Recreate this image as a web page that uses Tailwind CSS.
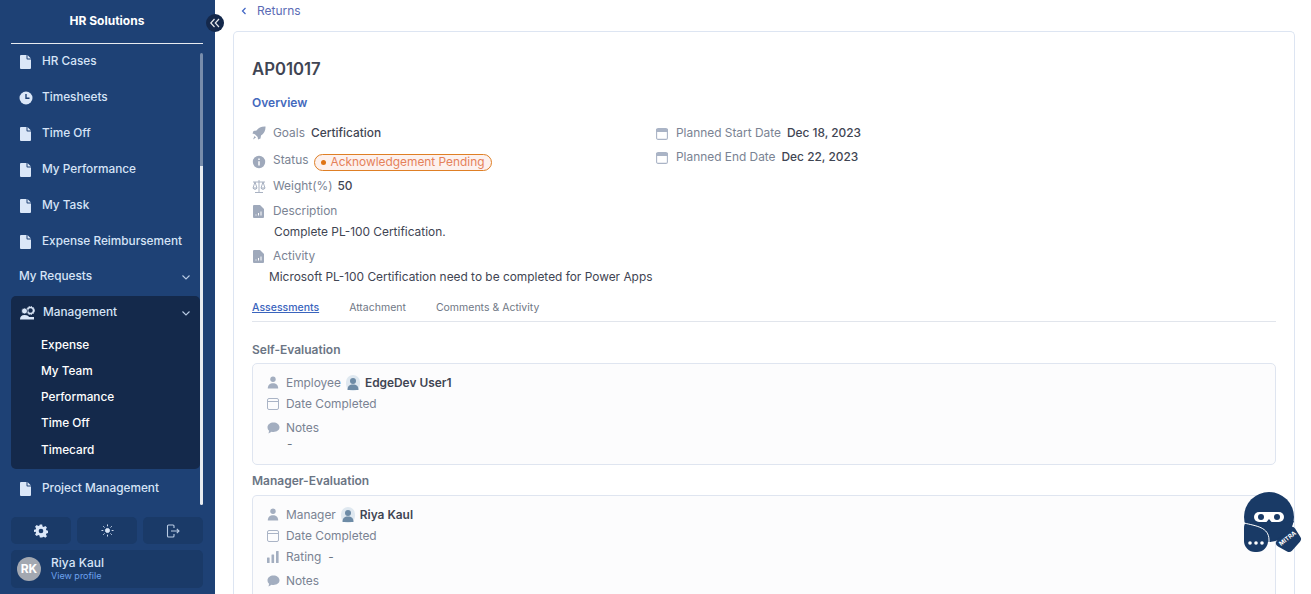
<!DOCTYPE html>
<html lang="en">
<head>
<meta charset="UTF-8">
<title>AP01017</title>
<script src="https://cdn.jsdelivr.net/npm/@tailwindcss/browser@4"></script>
</head>
<body class="h-[594px] overflow-hidden bg-white font-['Inter',sans-serif] text-[11.9px] text-[#374151]">
<div class="flex h-[594px] overflow-hidden">

  <!-- sidebar -->
  <aside class="relative w-[215px] h-full shrink-0 bg-[#1e4175] pl-[11px] pr-[12px]">
    <div class="h-[44px] border-b-[1.5px] border-white/90 pt-[12px] text-center text-[12px] leading-[17px] font-bold text-white">HR Solutions</div>
    <button class="absolute left-[206px] top-[14px] z-10 flex h-[18px] w-[18px] items-center justify-center rounded-full bg-[#14284b]">
      <svg width="12" height="12" viewBox="0 0 12 12" fill="none" stroke="#e5e7eb" stroke-width="1.2"><path d="M5.500 2 1.800 6l3.700 4M10 2 6.300 6 10 10"/></svg>
    </button>

    <!-- scrollbar -->
    <div class="absolute left-[200px] top-[53px] h-[113px] w-[3px] rounded-t bg-white/40"></div>
    <div class="absolute left-[200px] top-[166px] h-[339px] w-[3px] rounded-b bg-white/90"></div>

    <nav class="w-[189px] text-[11.8px] font-[450] text-[#d6e4f7]">
      <a class="flex h-[36px] items-center pl-[9px]">
        <svg class="mr-[11px] w-[11px] h-[14px]" viewBox="0 0 11 14" fill="#dbe7f8"><path d="M0 1a1 1 0 0 1 1-1h5.500v3.500a1 1 0 0 0 1 1H11V13a1 1 0 0 1-1 1H1a1 1 0 0 1-1-1zM7.500 0 11 3.500H7.500z"/></svg>
        HR Cases</a>
      <a class="flex h-[36px] items-center pl-[8px]">
        <svg class="mr-[9px] w-[14px] h-[14px]" viewBox="0 0 14 14"><circle cx="7" cy="7" r="6.500" fill="#dbe7f8"/><path d="M7 3v4.300h3.500" fill="none" stroke="#1e4175" stroke-width="1.400"/></svg>
        Timesheets</a>
      <a class="flex h-[36px] items-center pl-[9px]">
        <svg class="mr-[11px] w-[11px] h-[14px]" viewBox="0 0 11 14" fill="#dbe7f8"><path d="M0 1a1 1 0 0 1 1-1h5.500v3.500a1 1 0 0 0 1 1H11V13a1 1 0 0 1-1 1H1a1 1 0 0 1-1-1zM7.500 0 11 3.500H7.500z"/></svg>
        Time Off</a>
      <a class="flex h-[36px] items-center pl-[9px]">
        <svg class="mr-[11px] w-[11px] h-[14px]" viewBox="0 0 11 14" fill="#dbe7f8"><path d="M0 1a1 1 0 0 1 1-1h5.500v3.500a1 1 0 0 0 1 1H11V13a1 1 0 0 1-1 1H1a1 1 0 0 1-1-1zM7.500 0 11 3.500H7.500z"/></svg>
        My Performance</a>
      <a class="flex h-[36px] items-center pl-[9px]">
        <svg class="mr-[11px] w-[11px] h-[14px]" viewBox="0 0 11 14" fill="#dbe7f8"><path d="M0 1a1 1 0 0 1 1-1h5.500v3.500a1 1 0 0 0 1 1H11V13a1 1 0 0 1-1 1H1a1 1 0 0 1-1-1zM7.500 0 11 3.500H7.500z"/></svg>
        My Task</a>
      <a class="flex h-[36px] items-center pl-[9px]">
        <svg class="mr-[11px] w-[11px] h-[14px]" viewBox="0 0 11 14" fill="#dbe7f8"><path d="M0 1a1 1 0 0 1 1-1h5.500v3.500a1 1 0 0 0 1 1H11V13a1 1 0 0 1-1 1H1a1 1 0 0 1-1-1zM7.500 0 11 3.500H7.500z"/></svg>
        Expense Reimbursement</a>
      <a class="flex h-[36px] items-center justify-between pl-[8px] pr-[9px] pb-[2px]">
        My Requests
        <svg width="10" height="10" viewBox="0 0 10 10" fill="none" stroke="#b9cbe4" stroke-width="1.100"><path d="M1.500 3.500 5 7l3.500-3.500"/></svg>
      </a>

      <div class="h-[173px] rounded-[5px] bg-[#14294b]">
        <div class="flex h-[32px] items-center justify-between pt-[2px] pl-[8px] pr-[9px]">
          <span class="flex items-center">
            <svg class="mr-[8px]" width="16" height="15" viewBox="0 0 16 15" fill="#dbe7f8"><circle cx="11.500" cy="4.500" r="3" fill="none" stroke="#dbe7f8" stroke-width="1.500"/><circle cx="11.500" cy="4.500" r="4.100" fill="none" stroke="#dbe7f8" stroke-width="1" stroke-dasharray="1.200 1.200"/><circle cx="5.500" cy="5" r="3" stroke="#14294b" stroke-width=".8"/><path d="M1 13.500c0-3 1.500-4.500 4.500-4.500S10 10.500 10 11h5v2.500z"/></svg>
            Management
          </span>
          <svg width="10" height="10" viewBox="0 0 10 10" fill="none" stroke="#b9cbe4" stroke-width="1.100"><path d="M1.500 3.500 5 7l3.500-3.500"/></svg>
        </div>
        <div class="pl-[30px] pt-[4px] text-white leading-[26px]">
          <a class="block h-[26px]">Expense</a>
          <a class="block h-[26px]">My Team</a>
          <a class="block h-[26px]">Performance</a>
          <a class="block h-[26px]">Time Off</a>
          <a class="block h-[27px] leading-[28px]">Timecard</a>
        </div>
      </div>

      <a class="mt-[2px] flex h-[36px] items-center pl-[9px]">
        <svg class="mr-[11px] w-[11px] h-[14px]" viewBox="0 0 11 14" fill="#dbe7f8"><path d="M0 1a1 1 0 0 1 1-1h5.500v3.500a1 1 0 0 0 1 1H11V13a1 1 0 0 1-1 1H1a1 1 0 0 1-1-1zM7.500 0 11 3.500H7.500z"/></svg>
        Project Management</a>
    </nav>

    <div class="mt-[10px] flex gap-[6px]">
      <button class="flex h-[27px] w-[60px] items-center justify-center rounded-[5px] bg-[#1a3a68]">
        <svg width="14" height="14" viewBox="0 0 24 24" fill="#dbe7f8" fill-rule="evenodd"><path d="M10 1h4l.6 3.200 2 .9 2.800-1.800 2.800 2.800-1.800 2.800.9 2 3.200.6v4l-3.200.6-.9 2 1.800 2.800-2.800 2.800-2.800-1.800-2 .9L14 23h-4l-.6-3.200-2-.9-2.800 1.800-2.800-2.800 1.800-2.800-.9-2L-.5 14v-4l3.200-.6.900-2-1.800-2.800 2.800-2.800 2.800 1.800 2-.9zM12 8a4 4 0 1 0 0 8 4 4 0 0 0 0-8z"/></svg>
      </button>
      <button class="flex h-[27px] w-[60px] items-center justify-center rounded-[5px] bg-[#1a3a68]">
        <svg width="13" height="13" viewBox="0 0 14 14" fill="none" stroke="#dbe7f8"><circle cx="7" cy="7" r="2.200" fill="#dbe7f8"/><path d="M7 .5v2M7 11.500v2M.5 7h2M11.500 7h2M2.400 2.400l1.400 1.400M10.200 10.200l1.400 1.400M2.400 11.600l1.400-1.400M10.200 3.800l1.400-1.400"/></svg>
      </button>
      <button class="flex h-[27px] w-[60px] items-center justify-center rounded-[5px] bg-[#1a3a68]">
        <svg width="14" height="14" viewBox="0 0 14 14" fill="none" stroke="#b9cbe4" stroke-width="1.100"><path d="M8 4V2a1 1 0 0 0-1-1H2.500a1 1 0 0 0-1 1v10a1 1 0 0 0 1 1H7a1 1 0 0 0 1-1v-2M5 7h8M10.800 4.800 13 7l-2.200 2.200"/></svg>
      </button>
    </div>

    <div class="mt-[6px] flex h-[38px] items-center rounded-[5px] bg-[#1a3a68] pl-[6px]">
      <div class="flex h-[24px] w-[24px] items-center justify-center rounded-full bg-[#a3a8b1] text-[12px] font-bold text-white">RK</div>
      <div class="ml-[10px]">
        <div class="text-[12px] leading-[14px] font-[450] text-[#d6e4f7]">Riya Kaul</div>
        <div class="text-[9px] leading-[12px] text-[#6ea3ee]">View profile</div>
      </div>
    </div>
  </aside>

  <!-- main -->
  <main class="relative flex-1 pl-[18px] pr-[16px]">
    <a class="flex h-[31px] items-start pl-[7px] pt-[3px] text-[12px] leading-[15px] text-[#5b6bb5]">
      <svg class="mr-[9px] mt-[3px]" width="8" height="10" viewBox="0 0 8 10" fill="none" stroke="#3f64c4" stroke-width="1.200"><path d="M5.500 2 2.500 5l3 3"/></svg>
      Returns
    </a>

    <section class="h-[563px] overflow-hidden rounded-t-[5px] border border-b-0 border-[#dde5f2] bg-white px-[18px]">
      <h1 class="pt-[26px] text-[16.7px] leading-[22px] font-semibold text-[#3f4553]">AP01017</h1>
      <h2 class="mt-[15px] text-[12px] leading-[16px] font-semibold text-[#4469bd]">Overview</h2>

      <div class="flex">
        <div class="w-[404px]">
          <div class="mt-[14px] flex h-[16px] items-center">
            <svg class="mr-[7px]" width="14" height="14" viewBox="0 0 14 14" fill="#9fa9bb"><path d="M13.500.5c.2 4-1.300 7-4.500 9l-.500 3-2.500 1-.3-2.500-2.800-2.800L.500 7.500l1-2.500 3-.5C6.500 1.500 9.500.3 13.500.5zM2.500 10l1.500 1.500L1 13.500z"/></svg>
            <span class="mr-[6px] text-[#7a8393]">Goals</span>
            <span class="font-[450] text-[#3f4553]">Certification</span>
          </div>
          <div class="mt-[12px] flex h-[17px] items-center">
            <svg class="mr-[7px]" width="14" height="14" viewBox="0 0 14 14"><circle cx="7" cy="7" r="6.200" fill="#9fa9bb"/><path d="M7 6.300V10.500M7 3.500v1.500" stroke="#fff" stroke-width="1.500"/></svg>
            <span class="mr-[6px] mt-[-3px] text-[#7a8393]">Status</span>
            <span class="mt-[1px] flex h-[17px] items-center rounded-full border border-[#df7f25] bg-[#fdf1ee] pl-[6px] pr-[6px] text-[#e5815a]">
              <span class="mr-[4px] h-[5px] w-[5px] rounded-full bg-[#df7416]"></span>Acknowledgement Pending
            </span>
          </div>
          <div class="mt-[8px] flex h-[16px] items-center">
            <svg class="mr-[7px]" width="14" height="13" viewBox="0 0 14 13" fill="none" stroke="#9fa9bb" stroke-width=".9"><path d="M7 0v12M3 12.500h8M1 2h12M3 2 1 8h4zM11 2 9 8h4zM1 8c.5 1.800 3.500 1.800 4 0M9 8c.5 1.800 3.500 1.800 4 0"/></svg>
            <span class="mr-[5px] text-[#7a8393]">Weight(%)</span>
            <span class="font-[450] text-[#3f4553]">50</span>
          </div>
          <div class="mt-[9px] flex h-[16px] items-center">
            <svg class="mr-[9px] ml-[1px]" width="11" height="13" viewBox="0 0 11 13" fill="#9fa9bb"><path d="M1 0h6l4 4v8a1 1 0 0 1-1 1H1a1 1 0 0 1-1-1V1a1 1 0 0 1 1-1z"/><path d="M3 10.500V9.500M5.500 10.500V8M8 10.500V6.500" stroke="#fff" stroke-width="1"/></svg>
            <span class="text-[#7a8393]">Description</span>
          </div>
          <div class="mt-[5px] pl-[22px] leading-[16px] text-[#3f4553]">Complete PL-100 Certification.</div>
          <div class="mt-[8px] flex h-[16px] items-center">
            <svg class="mr-[9px] ml-[1px]" width="11" height="13" viewBox="0 0 11 13" fill="#9fa9bb"><path d="M1 0h6l4 4v8a1 1 0 0 1-1 1H1a1 1 0 0 1-1-1V1a1 1 0 0 1 1-1z"/><path d="M3 10.500V9.500M5.500 10.500V8M8 10.500V6.500" stroke="#fff" stroke-width="1"/></svg>
            <span class="text-[#7a8393]">Activity</span>
          </div>
          <div class="mt-[5px] w-[500px] pl-[17px] leading-[16px] text-[#3f4553]">Microsoft PL-100 Certification need to be completed for Power Apps</div>
        </div>
        <div>
          <div class="mt-[14px] flex h-[16px] items-center">
            <svg class="mr-[8px]" width="12" height="13" viewBox="0 0 12 13" fill="none" stroke="#aab4c6" stroke-width="1.100"><rect x=".6" y="1.600" width="10.800" height="10.800" rx="1.500"/><path d="M.6 2.500h10.800v2H.6z" fill="#aab4c6"/></svg>
            <span class="mr-[6px] text-[#7a8393]">Planned Start Date</span>
            <span class="font-[450] text-[#3f4553]">Dec 18, 2023</span>
          </div>
          <div class="mt-[8px] flex h-[16px] items-center">
            <svg class="mr-[8px]" width="12" height="13" viewBox="0 0 12 13" fill="none" stroke="#aab4c6" stroke-width="1.100"><rect x=".6" y="1.600" width="10.800" height="10.800" rx="1.500"/><path d="M.6 2.500h10.800v2H.6z" fill="#aab4c6"/></svg>
            <span class="mr-[6px] text-[#7a8393]">Planned End Date</span>
            <span class="font-[450] text-[#3f4553]">Dec 22, 2023</span>
          </div>
        </div>
      </div>

      <!-- tabs -->
      <div class="mt-[8px] flex h-[29px] items-center gap-[30px] border-b border-[#e1e5ec] pt-[1px] text-[10.5px] text-[#6f7785]">
        <a class="text-[#3a64bd] font-medium underline">Assessments</a>
        <a>Attachment</a>
        <a>Comments &amp; Activity</a>
      </div>

      <h3 class="mt-[20px] text-[12px] leading-[16px] font-semibold text-[#6b7584]">Self-Evaluation</h3>
      <div class="mt-[5px] h-[102px] rounded-[5px] border border-[#dfe5f0] bg-[#fcfcfd] pl-[14px]">
        <div class="mt-[10px] flex h-[17px] items-center">
          <svg class="mr-[7px]" width="12" height="13" viewBox="0 0 12 13" fill="#a3aec0"><circle cx="6" cy="3.200" r="2.700"/><path d="M.8 12.500C.8 9 3 7.300 6 7.300s5.200 1.700 5.200 5.200z"/></svg>
          <span class="text-[#7a8393]">Employee</span>
          <svg class="mx-[5px]" width="14" height="16" viewBox="0 0 14 16"><rect width="14" height="16" rx="7" fill="#dfe8f0"/><circle cx="7" cy="6" r="3" fill="#6d8ba6"/><path d="M1.500 15c0-4 2-5.500 5.500-5.500s5.500 1.500 5.500 5.500z" fill="#6d8ba6"/></svg>
          <span class="font-semibold text-[#3f4553]">EdgeDev User1</span>
        </div>
        <div class="mt-[4px] flex h-[17px] items-center">
          <svg class="mr-[7px]" width="12" height="13" viewBox="0 0 12 13" fill="none" stroke="#aab4c6"><rect x=".5" y="1.500" width="11" height="11" rx="1.500"/><path d="M.5 4.500h11"/></svg>
          <span class="text-[#7a8393]">Date Completed</span>
        </div>
        <div class="mt-[7px] flex h-[17px] items-center">
          <svg class="mr-[6px]" width="13" height="12" viewBox="0 0 13 12" fill="#a3aec0"><path d="M6.500.5c3.400 0 6 2.100 6 4.800S9.900 10 6.500 10c-.7 0-1.300-.1-1.900-.2L1.500 11.500l.6-2.800C1 7.900.5 6.700.5 5.300.5 2.600 3.100.5 6.500.5z"/></svg>
          <span class="text-[#7a8393]">Notes</span>
        </div>
        <div class="mt-[-1px] pl-[20px] leading-[17px] text-[#6b7584]">-</div>
      </div>

      <h3 class="mt-[8px] text-[12px] leading-[16px] font-semibold text-[#6b7584]">Manager-Evaluation</h3>
      <div class="mt-[6px] h-[99px] rounded-t-[5px] border border-b-0 border-[#dfe5f0] bg-[#fcfcfd] pl-[14px]">
        <div class="mt-[10px] flex h-[17px] items-center">
          <svg class="mr-[7px]" width="12" height="13" viewBox="0 0 12 13" fill="#a3aec0"><circle cx="6" cy="3.200" r="2.700"/><path d="M.8 12.500C.8 9 3 7.300 6 7.300s5.200 1.700 5.200 5.200z"/></svg>
          <span class="text-[#7a8393]">Manager</span>
          <svg class="mx-[5px]" width="14" height="16" viewBox="0 0 14 16"><rect width="14" height="16" rx="7" fill="#dfe8f0"/><circle cx="7" cy="6" r="3" fill="#6d8ba6"/><path d="M1.500 15c0-4 2-5.500 5.500-5.500s5.500 1.500 5.500 5.500z" fill="#6d8ba6"/></svg>
          <span class="font-semibold text-[#3f4553]">Riya Kaul</span>
        </div>
        <div class="mt-[4px] flex h-[17px] items-center">
          <svg class="mr-[7px]" width="12" height="13" viewBox="0 0 12 13" fill="none" stroke="#aab4c6"><rect x=".5" y="1.500" width="11" height="11" rx="1.500"/><path d="M.5 4.500h11"/></svg>
          <span class="text-[#7a8393]">Date Completed</span>
        </div>
        <div class="mt-[4px] flex h-[17px] items-center">
          <svg class="mr-[7px]" width="12" height="12" viewBox="0 0 12 12" fill="#a3aec0"><rect y="6.500" width="2.600" height="5.500" rx=".5"/><rect x="4.500" y="3.500" width="2.600" height="8.500" rx=".5"/><rect x="9" y="0" width="2.600" height="12" rx=".5"/></svg>
          <span class="text-[#7a8393]">Rating</span>
          <span class="ml-[7px] text-[#6b7584]">-</span>
        </div>
        <div class="mt-[7px] flex h-[17px] items-center">
          <svg class="mr-[6px]" width="13" height="12" viewBox="0 0 13 12" fill="#a3aec0"><path d="M6.500.5c3.400 0 6 2.100 6 4.800S9.900 10 6.500 10c-.7 0-1.300-.1-1.900-.2L1.500 11.500l.6-2.800C1 7.900.5 6.700.5 5.300.5 2.600 3.100.5 6.500.5z"/></svg>
          <span class="text-[#7a8393]">Notes</span>
        </div>
      </div>
    </section>

    <!-- chat bot -->
    <svg class="absolute left-[1029px] top-[491px]" width="60" height="62" viewBox="0 0 60 62">
      <circle cx="25" cy="26" r="25" fill="#193a66"/>
      <rect x="0" y="26" width="24" height="35" rx="11" fill="#193a66"/>
      <path d="M25 35 50 30 45 40 30 50 26 50z" fill="#193a66"/>
      <path d="M36 52 48 40 53 48 45 57z" fill="#193a66" stroke="#193a66" stroke-width="8" stroke-linejoin="round"/>
      <path d="M0 32C12 35 25 36 25 49v6" fill="none" stroke="#fff" stroke-width="1"/>
      <rect x="10" y="21" width="30" height="10" rx="5" fill="#fff"/>
      <circle cx="17" cy="26" r="3" fill="#193a66"/><circle cx="33" cy="26" r="3" fill="#193a66"/>
      <path d="M22 31.500l3-3.500 3 3.500z" fill="#193a66"/>
      <circle cx="6" cy="52" r="1.800" fill="#fff"/><circle cx="12" cy="52" r="1.800" fill="#fff"/><circle cx="18" cy="52" r="1.800" fill="#fff"/>
      <text transform="translate(37 55) rotate(-38)" font-family="Inter,sans-serif" font-size="6" font-weight="700" fill="#fff">MITRA</text>
    </svg>
  </main>
</div>
</body>
</html>
